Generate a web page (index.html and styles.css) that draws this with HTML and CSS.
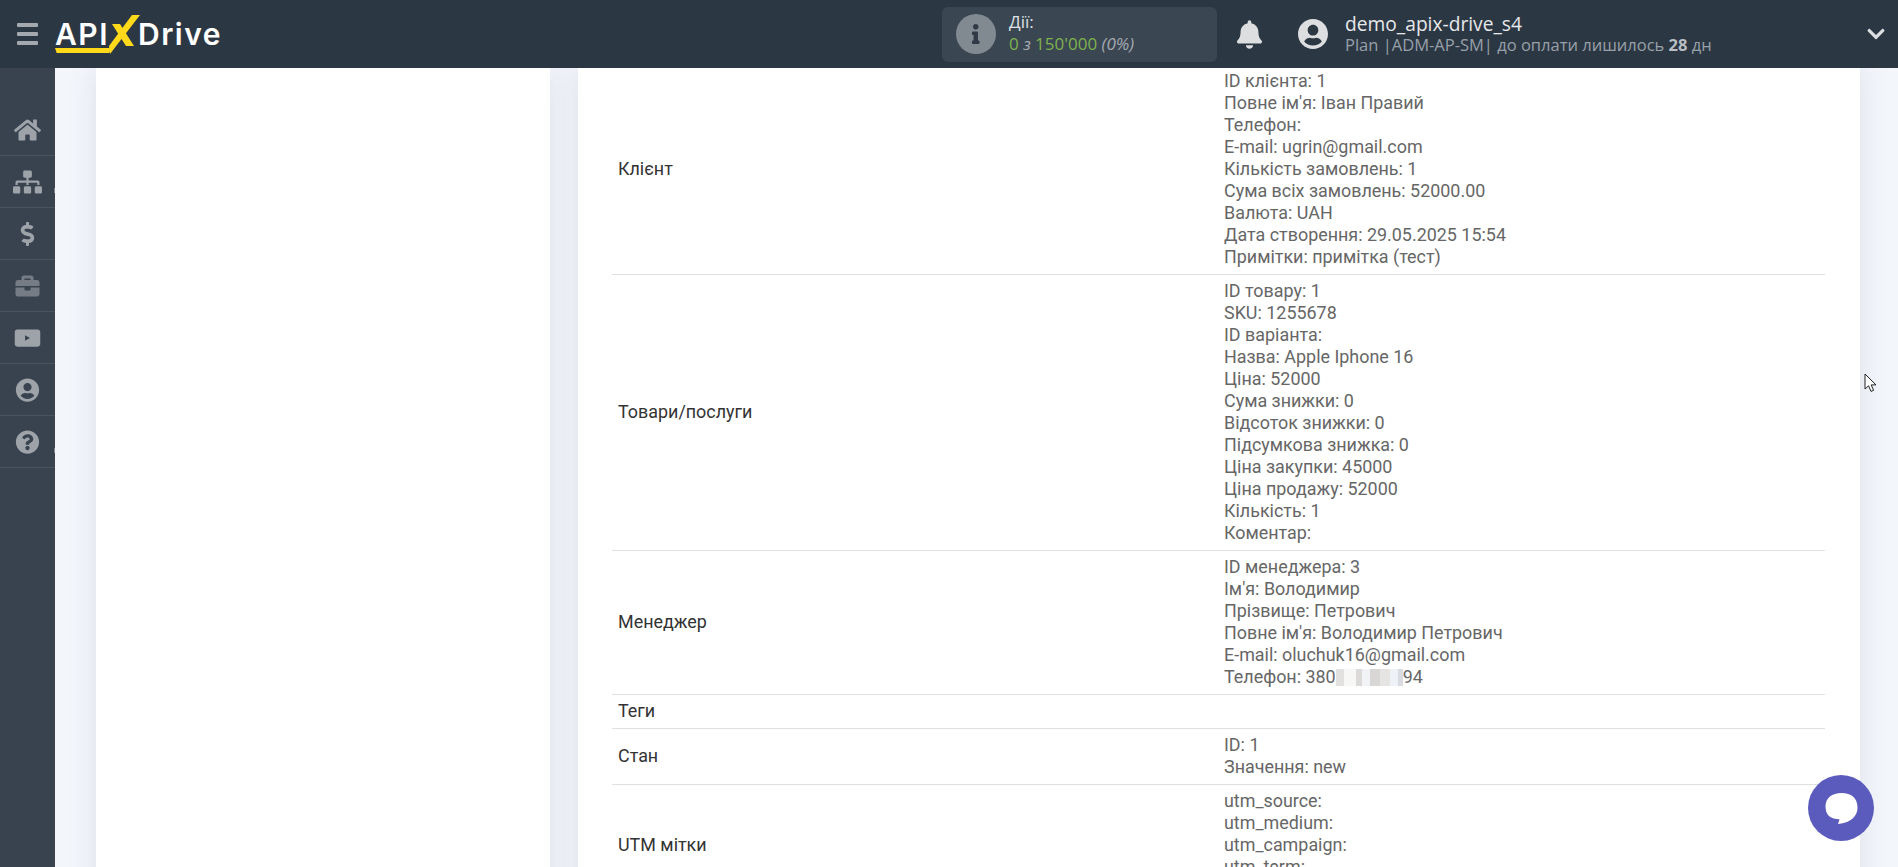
FILE: index.html
```html
<!DOCTYPE html>
<html lang="uk">
<head>
<meta charset="utf-8">
<title>ApiX-Drive</title>
<link rel="stylesheet" href="styles.css">
</head>
<body>
<header class="topbar">
  <div class="burger"><span></span><span></span><span></span></div>
  <div class="logo">
    <span class="logo-word logo-api">API</span>
    <svg class="logo-x" viewBox="0 0 36 42"><path d="M7 11h8l14 22h-8z" fill="#ffd91a"/><path d="M27 2h8L5 41 4 33z" fill="#ffd91a"/></svg>
    <span class="logo-word">Drive</span>
    <i class="logo-bar"></i>
  </div>
  <div class="actions">
    <div class="info-dot"><svg viewBox="0 0 192 512"><path d="M20 424.229h20V279.771H20c-11.046 0-20-8.954-20-20V212c0-11.046 8.954-20 20-20h112c11.046 0 20 8.954 20 20v212.229h20c11.046 0 20 8.954 20 20V492c0 11.046-8.954 20-20 20H20c-11.046 0-20-8.954-20-20v-47.771c0-11.046 8.954-20 20-20zM96 0C56.235 0 24 32.235 24 72s32.235 72 72 72 72-32.235 72-72S135.764 0 96 0z"/></svg></div>
    <div class="actions-text">
      <div class="actions-title">Дії:</div>
      <div class="actions-count">0 <em>з</em> 150'000 <em>(0%)</em></div>
    </div>
  </div>
  <svg class="bell" viewBox="0 0 448 512"><path d="M224 512c35.32 0 63.97-28.65 63.97-64H160.03c0 35.35 28.65 64 63.97 64zm215.39-149.71c-19.32-20.76-55.47-51.99-55.47-154.29 0-77.7-54.48-139.9-127.94-155.16V32c0-17.67-14.32-32-31.98-32s-31.98 14.33-31.98 32v20.84C118.56 68.1 64.08 130.3 64.08 208c0 102.3-36.15 133.53-55.47 154.29-6 6.45-8.66 14.16-8.61 21.71.11 16.4 12.98 32 32.1 32h383.8c19.12 0 32-15.6 32.1-32 .05-7.55-2.61-15.27-8.61-21.71z"/></svg>
  <svg class="avatar" viewBox="0 0 496 512"><path d="M248 8C111 8 0 119 0 256s111 248 248 248 248-111 248-248S385 8 248 8zm0 96c48.6 0 88 39.4 88 88s-39.4 88-88 88-88-39.4-88-88 39.4-88 88-88zm0 344c-58.7 0-111.3-26.6-146.5-68.2 18.8-35.4 55.6-59.8 98.5-59.8 2.4 0 4.8.4 7.1 1.1 13 4.2 26.6 6.9 40.9 6.9 14.3 0 28-2.7 40.9-6.9 2.3-.7 4.7-1.1 7.1-1.1 42.9 0 79.7 24.4 98.5 59.8C359.3 421.4 306.7 448 248 448z"/></svg>
  <div class="user">
    <div class="user-name">demo_apix-drive_s4</div>
    <div class="user-plan">Plan |ADM-AP-SM| до оплати лишилось <b>28</b> дн</div>
  </div>
  <svg class="chevron" viewBox="0 0 448 512"><path d="M207.029 381.476L12.686 187.132c-9.373-9.373-9.373-24.569 0-33.941l22.667-22.667c9.357-9.357 24.522-9.375 33.901-.04L224 284.505l154.745-154.021c9.379-9.335 24.544-9.317 33.901.04l22.667 22.667c9.373 9.373 9.373 24.569 0 33.941L240.971 381.476c-9.373 9.372-24.569 9.372-33.942 0z"/></svg>
</header>

<div class="body-row">
  <nav class="sidebar">
    <a class="nav-item"><svg viewBox="0 0 576 512"><path d="M280.37 148.26L96 300.11V464a16 16 0 0 0 16 16l112.06-.29a16 16 0 0 0 15.92-16V368a16 16 0 0 1 16-16h64a16 16 0 0 1 16 16v95.64a16 16 0 0 0 16 16.05L464 480a16 16 0 0 0 16-16V300L295.67 148.26a12.19 12.19 0 0 0-15.3 0zM571.6 251.47L488 182.56V44.05a12 12 0 0 0-12-12h-56a12 12 0 0 0-12 12v72.61L318.47 43a48 48 0 0 0-61 0L4.34 251.47a12 12 0 0 0-1.6 16.9l25.5 31A12 12 0 0 0 45.15 301l235.22-193.74a12.19 12.19 0 0 1 15.3 0L530.9 301a12 12 0 0 0 16.9-1.6l25.5-31a12 12 0 0 0-1.7-16.93z"/></svg></a>
    <a class="nav-item nav-tip"><svg viewBox="0 0 640 512"><path d="M128 352H32c-17.67 0-32 14.33-32 32v96c0 17.67 14.33 32 32 32h96c17.67 0 32-14.33 32-32v-96c0-17.67-14.33-32-32-32zm-24-80h192v48h48v-48h192v48h48v-57.59c0-21.17-17.23-38.41-38.41-38.41H344v-64h40c17.67 0 32-14.33 32-32V32c0-17.67-14.33-32-32-32H256c-17.67 0-32 14.33-32 32v96c0 17.67 14.33 32 32 32h40v64H94.41C73.23 224 56 241.23 56 262.41V320h48v-48zm264 80h-96c-17.67 0-32 14.33-32 32v96c0 17.67 14.33 32 32 32h96c17.67 0 32-14.33 32-32v-96c0-17.67-14.33-32-32-32zm240 0h-96c-17.67 0-32 14.33-32 32v96c0 17.67 14.33 32 32 32h96c17.67 0 32-14.33 32-32v-96c0-17.67-14.33-32-32-32z"/></svg></a>
    <a class="nav-item"><svg viewBox="0 0 288 512"><path d="M209.2 233.4l-108-31.6C88.7 198.2 80 186.5 80 173.5c0-16.3 13.2-29.5 29.5-29.5h66.3c12.2 0 24.2 3.7 34.2 10.5 6.1 4.1 14.3 3.1 19.5-2l34.8-34c7.1-6.9 6.1-18.4-1.8-24.5C238 74.8 207.4 64.1 176 64V16c0-8.8-7.2-16-16-16h-32c-8.8 0-16 7.2-16 16v48h-2.5C45.8 64-5.4 118.7.5 183.6c4.2 46.1 39.4 83.6 83.8 96.6l102.5 30c12.5 3.7 21.2 15.3 21.2 28.3 0 16.3-13.2 29.5-29.5 29.5h-66.3C100 368 88 364.3 78 357.5c-6.1-4.1-14.3-3.1-19.5 2l-34.8 34c-7.1 6.9-6.1 18.4 1.8 24.5 24.5 19.2 55.1 29.9 86.5 30v48c0 8.8 7.2 16 16 16h32c8.8 0 16-7.2 16-16v-48.2c46.6-.9 90.3-28.6 105.7-72.7 21.5-61.6-14.6-124.8-72.5-141.7z"/></svg></a>
    <a class="nav-item nav-dim"><svg viewBox="0 0 512 512"><path d="M320 336c0 8.84-7.16 16-16 16h-96c-8.84 0-16-7.16-16-16v-48H0v144c0 25.6 22.4 48 48 48h416c25.6 0 48-22.4 48-48V288H320v48zm144-208h-80V80c0-25.6-22.4-48-48-48H176c-25.6 0-48 22.4-48 48v48H48c-25.6 0-48 22.4-48 48v80h512v-80c0-25.6-22.4-48-48-48zm-144 0H192V96h128v32z"/></svg></a>
    <a class="nav-item"><svg viewBox="0 0 576 512"><path fill-rule="evenodd" d="M70 72h436c30 0 54 24 54 54v260c0 30-24 54-54 54H70c-30 0-54-24-54-54V126c0-30 24-54 54-54zM236 196v120l104-60z"/></svg></a>
    <a class="nav-item"><svg viewBox="0 0 496 512"><path d="M248 8C111 8 0 119 0 256s111 248 248 248 248-111 248-248S385 8 248 8zm0 96c48.6 0 88 39.4 88 88s-39.4 88-88 88-88-39.4-88-88 39.4-88 88-88zm0 344c-58.7 0-111.3-26.6-146.5-68.2 18.8-35.4 55.6-59.8 98.5-59.8 2.4 0 4.8.4 7.1 1.1 13 4.2 26.6 6.9 40.9 6.9 14.3 0 28-2.7 40.9-6.9 2.3-.7 4.7-1.1 7.1-1.1 42.9 0 79.7 24.4 98.5 59.8C359.3 421.4 306.7 448 248 448z"/></svg></a>
    <a class="nav-item nav-tip"><svg viewBox="0 0 512 512"><path d="M504 256c0 136.997-111.043 248-248 248S8 392.997 8 256C8 119.083 119.043 8 256 8s248 111.083 248 248zM262.655 90c-54.497 0-89.255 22.957-116.549 63.758-3.536 5.286-2.353 12.415 2.715 16.258l34.699 26.31c5.205 3.947 12.621 3.008 16.665-2.122 17.864-22.658 30.113-35.797 57.303-35.797 20.429 0 45.698 13.148 45.698 32.958 0 14.976-12.363 22.667-32.534 33.976C247.128 238.528 216 254.941 216 296v4c0 6.627 5.373 12 12 12h56c6.627 0 12-5.373 12-12v-1.333c0-28.462 83.186-29.647 83.186-106.667 0-58.002-60.165-102-116.531-102zM256 338c-25.365 0-46 20.635-46 46 0 25.364 20.635 46 46 46s46-20.636 46-46c0-25.365-20.635-46-46-46z"/></svg></a>
  </nav>

  <main class="content">
    <section class="card card-left"></section>
    <section class="card card-right">
      <div class="row">
        <div class="label">Клієнт</div>
        <div class="value">ID клієнта: 1<br>Повне ім'я: Іван Правий<br>Телефон:<br>E-mail: ugrin@gmail.com<br>Кількість замовлень: 1<br>Сума всіх замовлень: 52000.00<br>Валюта: UAH<br>Дата створення: 29.05.2025 15:54<br>Примітки: примітка (тест)</div>
      </div>
      <div class="row">
        <div class="label">Товари/послуги</div>
        <div class="value">ID товару: 1<br>SKU: 1255678<br>ID варіанта:<br>Назва: Apple Iphone 16<br>Ціна: 52000<br>Сума знижки: 0<br>Відсоток знижки: 0<br>Підсумкова знижка: 0<br>Ціна закупки: 45000<br>Ціна продажу: 52000<br>Кількість: 1<br>Коментар:</div>
      </div>
      <div class="row">
        <div class="label">Менеджер</div>
        <div class="value">ID менеджера: 3<br>Ім'я: Володимир<br>Прізвище: Петрович<br>Повне ім'я: Володимир Петрович<br>E-mail: oluchuk16@gmail.com<br>Телефон: 380<span class="blurred"></span>94</div>
      </div>
      <div class="row">
        <div class="label">Теги</div>
        <div class="value"></div>
      </div>
      <div class="row">
        <div class="label">Стан</div>
        <div class="value">ID: 1<br>Значення: new</div>
      </div>
      <div class="row">
        <div class="label">UTM мітки</div>
        <div class="value">utm_source:<br>utm_medium:<br>utm_campaign:<br>utm_term:<br>utm_content:</div>
      </div>
    </section>
  </main>
</div>

<svg class="cursor" viewBox="0 0 13 20"><path d="M1 1v15l3.600-3.200 2.400 5.600 2.600-1.100-2.400-5.400H12z" fill="#fff" stroke="#222" stroke-width="1"/></svg>
<div class="chat"><svg viewBox="0 0 33 33"><path d="M16.500 1C26.500 1 32.500 6 32.500 15.500 32.500 23.500 27 30.500 13 32l1.500-4.800C6 27 .5 23.500.5 14.500.5 6 7 1 16.500 1z" fill="#fff"/></svg></div>
</body>
</html>
```

FILE: styles.css
```css
* { box-sizing: border-box; }
html, body { margin: 0; height: 100%; overflow: hidden; }
body { background: #f3f6fb; font-family: "Roboto", "Liberation Sans", sans-serif; display: flex; flex-direction: column; }

.topbar { height: 68px; flex: none; background: #2c3744; display: flex; align-items: center; position: relative; z-index: 2; }
.burger { width: 21px; margin-left: 17px; display: flex; flex-direction: column; gap: 5px; }
.burger span { height: 4px; background: #a3a9af; border-radius: 1px; }

.logo { position: relative; width: 170px; height: 44px; margin-left: 17px; display: flex; align-items: center; color: #fff; }
.logo-word { font-family: "Inter", sans-serif; font-weight: 600; font-size: 30px; letter-spacing: 1.500px; line-height: 1; margin-top: -1px; }
.logo-x { width: 36px; height: 42px; flex: none; margin: 0 -3px 0 -4px; }
.logo-bar { position: absolute; left: 0; top: 36px; width: 56px; height: 5px; background: #ffd91a; clip-path: polygon(0 0, 100% 0, 97% 100%, 3% 100%); }

.actions { width: 275px; height: 55px; margin-left: 717px; background: #3a4651; border-radius: 6px; display: flex; align-items: center; padding-left: 14px; }
.info-dot { width: 40px; height: 40px; border-radius: 50%; background: #818a91; display: flex; align-items: center; justify-content: center; flex: none; }
.info-dot svg { height: 20px; fill: #2f3a46; }
.actions-text { margin: -3px 0 0 13px; font-family: "Open Sans", sans-serif; font-size: 17px; line-height: 22px; }
.actions-title { color: #dfe2e5; }
.actions-count { color: #7fb24e; }
.actions-count em { color: #a5abb1; }

.bell { width: 25px; height: 29px; fill: #dcdee0; margin-left: 20px; flex: none; }
.avatar { width: 30px; height: 36px; fill: #dcdee0; margin-left: 36px; flex: none; }
.user { margin-left: 17px; font-family: "Open Sans", sans-serif; flex: 1; }
.user-name { color: #e6e8ea; font-size: 19.200px; line-height: 21px; }
.user-plan { color: #98a0a8; font-size: 16.500px; line-height: 21px; }
.user-plan b { color: #b9bec3; }
.chevron { width: 18px; height: 20px; fill: #dcdee0; margin-right: 13px; flex: none; }

.body-row { flex: 1; min-height: 0; display: flex; overflow: hidden; }
.sidebar { width: 55px; flex: none; background: #39434f; padding-top: 36px; }
.nav-item { position: relative; height: 52px; border-bottom: 1px solid #4a545f; display: flex; align-items: center; justify-content: center; }
.nav-item svg { width: 29px; height: 24px; fill: #9ea3a9; }
.nav-dim svg { fill: #757c85; }
.nav-tip::after { content: ""; position: absolute; right: 0; top: 32px; width: 1px; height: 5px; background: #7d848c; }

.content { flex: 1; min-width: 0; display: flex; align-items: flex-start; gap: 28px; padding-left: 41px; }
.card { background: #fff; box-shadow: 0 0 30px rgba(40, 50, 80, .10); }
.card-left { width: 454px; height: 900px; }
.card-right { width: 1282px; padding: 0 35px 0 34px; margin-top: -3px; }

.row { display: grid; grid-template-columns: 612px 1fr; align-items: center; border-bottom: 1px solid #e0e0e0; padding: 4.500px 0 6.500px; font-size: 17.920px; line-height: 22px; }
.label { color: #333; padding-left: 6px; }
.value { color: #666; min-height: 22px; }
.blurred { display: inline-block; width: 67px; height: 17px; vertical-align: -3px; background: linear-gradient(90deg, #e3e1df 0 8px, #f7f7f6 8px 20px, #dcdad8 20px 26px, #f1f3f6 26px 34px, #d9d7d5 34px 44px, #e6e4e2 44px 54px, #eef1f5 54px 62px, #d8dce2 62px 67px); }

.cursor { position: absolute; left: 1864px; top: 373px; width: 13px; height: 20px; }
.chat { position: absolute; left: 1808px; top: 775px; width: 66px; height: 66px; border-radius: 50%; background: #5b5bbd; display: flex; align-items: center; justify-content: center; }
.chat svg { width: 33px; height: 33px; }
```
